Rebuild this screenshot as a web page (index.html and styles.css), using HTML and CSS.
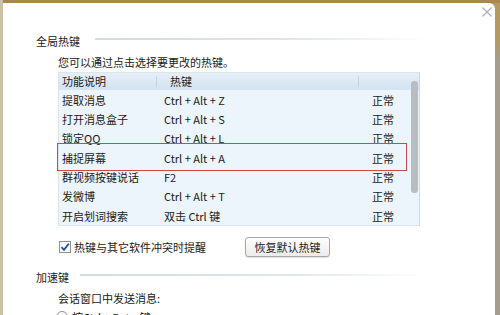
FILE: index.html
```html
<!DOCTYPE html>
<html lang="zh-CN">
<head>
<meta charset="utf-8">
<link rel="stylesheet" href="styles.css">
</head>
<body>
<div class="frame">
  <div class="dialog">
    <svg class="close" viewBox="0 0 10 10" width="10" height="10"><path d="M0.5 0.5 L9.5 9.5 M9.5 0.5 L0.5 9.5" stroke="#b2b2b2" stroke-width="1.3" fill="none"/></svg>
    <section class="group first">
      <div class="group-title"><span>全局热键</span><i class="rule"></i></div>
      <div class="group-body">
        <p class="desc">您可以通过点击选择要更改的热键。</p>
        <div class="table">
          <div class="thead">
            <span class="c1">功能说明</span>
            <span class="c2">热键</span>
            <span class="c3"></span>
          </div>
          <div class="row"><span class="c1">提取消息</span><span class="c2">Ctrl + Alt + Z</span><span class="c3">正常</span></div>
          <div class="row"><span class="c1">打开消息盒子</span><span class="c2">Ctrl + Alt + S</span><span class="c3">正常</span></div>
          <div class="row"><span class="c1">锁定QQ</span><span class="c2">Ctrl + Alt + L</span><span class="c3">正常</span></div>
          <div class="row"><span class="c1">捕捉屏幕</span><span class="c2">Ctrl + Alt + A</span><span class="c3">正常</span></div>
          <div class="row"><span class="c1">群视频按键说话</span><span class="c2">F2</span><span class="c3">正常</span></div>
          <div class="row"><span class="c1">发微博</span><span class="c2">Ctrl + Alt + T</span><span class="c3">正常</span></div>
          <div class="row"><span class="c1">开启划词搜索</span><span class="c2">双击 Ctrl 键</span><span class="c3">正常</span></div>
          <i class="thumb"></i>
          <i class="highlight"></i>
        </div>
        <div class="options">
          <label class="check"><i class="box"><svg viewBox="0 0 10 10" width="10" height="10"><path d="M1.5 5.2 L4 7.8 L8.8 1.8" fill="none" stroke="#1d4f9c" stroke-width="1.8"/></svg></i>热键与其它软件冲突时提醒</label>
          <button class="btn">恢复默认热键</button>
        </div>
      </div>
    </section>
    <section class="group">
      <div class="group-title"><span>加速键</span><i class="rule"></i></div>
      <div class="group-body">
        <p class="desc">会话窗口中发送消息:</p>
        <label class="radio"><i class="dot"></i>按Ctrl + Enter键</label>
      </div>
    </section>
  </div>
</div>
</body>
</html>
```

FILE: styles.css
```css
* { box-sizing: border-box; }
html, body { margin: 0; padding: 0; }
body {
  width: 500px;
  height: 315px;
  overflow: hidden;
  font-family: "Noto Sans CJK SC", "Noto Sans", sans-serif;
  font-size: 11px;
  line-height: 16px;
  color: #1a1a1a;
  background: #a49d90;
}
.frame {
  height: 315px;
  padding: 3px 5px 0 3px;
  background: linear-gradient(to right, #cbc1a6 0 3px, transparent 3px),
              linear-gradient(to bottom, #a9894a 0 3px, #b39a62 3px 40px, #a49d90 60px);
}
.dialog {
  position: relative;
  height: 312px;
  background: #fff;
  border-top-right-radius: 6px;
  padding: 30px 0 0 33px;
  display: flex;
  flex-direction: column;
}
.close {
  position: absolute;
  right: 3px;
  top: 4px;
}
.group-title {
  display: flex;
  align-items: center;
  height: 16px;
}
.group-title span { color: #222; }
.rule {
  display: block;
  height: 2px;
  margin-left: 15px;
  margin-top: -4px;
  width: 336px;
  background: linear-gradient(to right, #d3dbe3, #dfe6ec 60%, rgba(255,255,255,0));
}
.group + .group { margin-top: 12px; }
.group + .group .rule { margin-left: 11px; width: 352px; }
.group-body { padding-left: 22px; }
.desc { margin: 5px 0 0; }
.table {
  position: relative;
  margin-top: 2px;
  width: 362px;
  background: #edf5fc;
  border: 1px solid #dbe5ee;
  border-right-color: #d0d6dc;
}
.thead {
  display: flex;
  height: 17px;
  align-items: center;
  background: linear-gradient(to bottom, #e6eff8, #d3e3f2);
  border-bottom: 1px solid #d8e4ef;
}
.thead .c1 { width: 98px; padding-left: 3px; border-right: 1px solid #c6d2dd; height: 11px; line-height: 11px; }
.thead .c2 { width: 202px; padding-left: 13px; border-right: 1px solid #c6d2dd; height: 11px; line-height: 11px; }
.row {
  display: flex;
  height: 19.33px;
  align-items: center;
}
.row .c1 { width: 105px; padding-left: 3px; }
.row .c2 { width: 208px; }
.thumb {
  position: absolute;
  right: 1px;
  top: 8px;
  width: 7px;
  height: 112px;
  border-radius: 3px;
  background: #b9bdc1;
}
.highlight {
  position: absolute;
  left: -2px;
  top: 70px;
  width: 350px;
  height: 28px;
  border: 1px solid #d0474a;
}
.options {
  display: flex;
  align-items: center;
  margin-top: 11px;
  height: 20px;
}
.check {
  display: flex;
  align-items: center;
  width: 187px;
}
.box {
  width: 12px;
  height: 12px;
  margin: 0 3px 0 1px;
  border: 1px solid #8e8f8f;
  background: linear-gradient(#f4f4f4, #fff);
  display: flex;
  align-items: center;
  justify-content: center;
}
.btn {
  font: inherit;
  color: #222;
  width: 85px;
  height: 20px;
  padding: 0;
  border: 1px solid #a7a7a7;
  border-radius: 3px;
  background: linear-gradient(#fdfdfd, #ececec);
  box-shadow: 0 1px 1px rgba(0,0,0,0.12);
}
.radio {
  display: flex;
  align-items: center;
  margin-top: 3px;
  margin-left: -2px;
}
.dot {
  width: 12px;
  height: 12px;
  border: 1px solid #8e8f8f;
  border-radius: 50%;
  margin-right: 4px;
}
```
